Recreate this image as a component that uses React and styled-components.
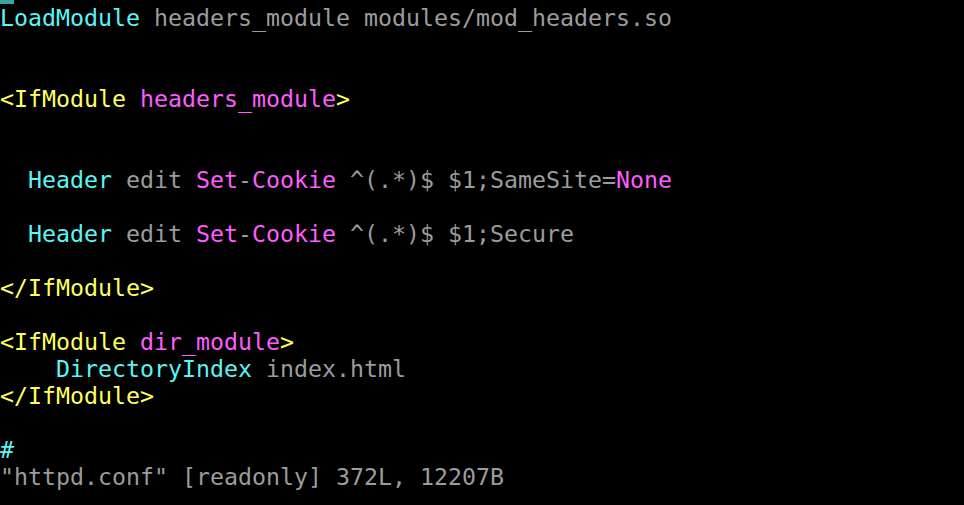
import React from "react";
import styled, { createGlobalStyle } from "styled-components";

const Global = createGlobalStyle`
  html, body { margin: 0; padding: 0; background: #000; }
  body { overflow: hidden; }
`;

const Screen = styled.div`
  width: 964px;
  height: 505px;
  background: #000;
  font-family: "DejaVu Sans Mono", "Liberation Mono", monospace;
  font-size: 23.25px;
  color: #9c9c9c;
  display: flex;
  flex-direction: column;
  overflow: hidden;
`;

const CursorRow = styled.div`
  height: 4px;
  display: flex;
`;

const Cursor = styled.div`
  width: 14px;
  height: 4px;
  background: #3fa3a3;
`;

const Line = styled.div`
  height: 27px;
  line-height: 27px;
  white-space: pre;
  flex: none;
`;

const colors = {
  c: "#5af5f5",
  m: "#ff5cff",
  y: "#ffff5c",
  g: "#9c9c9c",
};

const Tok = styled.span`
  color: ${(p) => colors[p.$k]};
`;

const lines = [
  [["c", "LoadModule"], ["g", " headers_module modules/mod_headers.so"]],
  [],
  [],
  [["y", "<IfModule "], ["m", "headers_module"], ["y", ">"]],
  [],
  [],
  [["g", "  "], ["c", "Header"], ["g", " edit "], ["m", "Set"], ["g", "-"], ["m", "Cookie"], ["g", " ^(.*)$ $1;SameSite="], ["m", "None"]],
  [],
  [["g", "  "], ["c", "Header"], ["g", " edit "], ["m", "Set"], ["g", "-"], ["m", "Cookie"], ["g", " ^(.*)$ $1;Secure"]],
  [],
  [["y", "</IfModule>"]],
  [],
  [["y", "<IfModule "], ["m", "dir_module"], ["y", ">"]],
  [["g", "    "], ["c", "DirectoryIndex"], ["g", " index.html"]],
  [["y", "</IfModule>"]],
  [],
  [["c", "#"]],
  [["g", "\"httpd.conf\" [readonly] 372L, 12207B"]],
];

export default function App() {
  return (
    <>
      <Global />
      <Screen>
        <CursorRow>
          <Cursor />
        </CursorRow>
        {lines.map((toks, i) => (
          <Line key={i}>
            {toks.map(([k, t], j) => (
              <Tok key={j} $k={k}>
                {t}
              </Tok>
            ))}
          </Line>
        ))}
      </Screen>
    </>
  );
}
